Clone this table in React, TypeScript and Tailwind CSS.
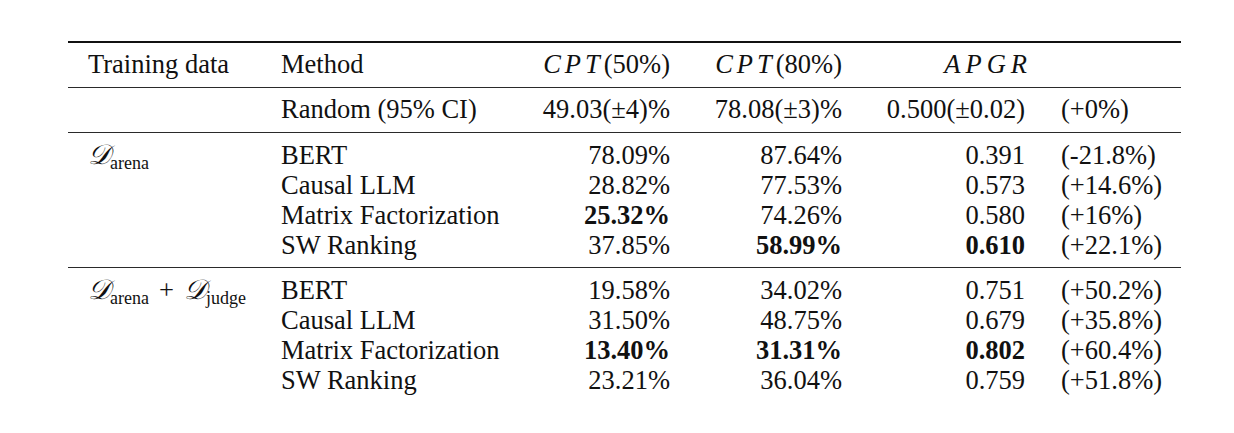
import React from 'react';

type Row = {
  method: string;
  cpt50: string;
  cpt80: string;
  apgr: string;
  gain: string;
  bold?: ('cpt50' | 'cpt80' | 'apgr')[];
};

const arenaRows: Row[] = [
  { method: 'BERT', cpt50: '78.09%', cpt80: '87.64%', apgr: '0.391', gain: '(-21.8%)' },
  { method: 'Causal LLM', cpt50: '28.82%', cpt80: '77.53%', apgr: '0.573', gain: '(+14.6%)' },
  { method: 'Matrix Factorization', cpt50: '25.32%', cpt80: '74.26%', apgr: '0.580', gain: '(+16%)', bold: ['cpt50'] },
  { method: 'SW Ranking', cpt50: '37.85%', cpt80: '58.99%', apgr: '0.610', gain: '(+22.1%)', bold: ['cpt80', 'apgr'] },
];

const judgeRows: Row[] = [
  { method: 'BERT', cpt50: '19.58%', cpt80: '34.02%', apgr: '0.751', gain: '(+50.2%)' },
  { method: 'Causal LLM', cpt50: '31.50%', cpt80: '48.75%', apgr: '0.679', gain: '(+35.8%)' },
  { method: 'Matrix Factorization', cpt50: '13.40%', cpt80: '31.31%', apgr: '0.802', gain: '(+60.4%)', bold: ['cpt50', 'cpt80', 'apgr'] },
  { method: 'SW Ranking', cpt50: '23.21%', cpt80: '36.04%', apgr: '0.759', gain: '(+51.8%)' },
];

const cols = 'grid grid-cols-[213px_259px_130px_172px_183px_1fr]';

function D({ sub }: { sub: string }) {
  return (
    <span className="whitespace-nowrap leading-none">
      <span className="italic text-[28px] leading-none">𝒟</span>
      <span className="text-[18px] leading-none relative top-[5px]">{sub}</span>
    </span>
  );
}

function Group({ label, rows, last }: { label: React.ReactNode; rows: Row[]; last?: boolean }) {
  return (
    <div className={last ? 'pt-[7px]' : 'pt-[7px] pb-[7px] border-b border-[#2a2a2a]'}>
      {rows.map((r, i) => (
        <div key={r.method} className={`${cols} h-[30px] leading-[30px]`}>
          <div className="pl-5 whitespace-nowrap">{i === 0 ? label : null}</div>
          <div className="whitespace-nowrap">{r.method}</div>
          <div className={`text-right ${r.bold?.includes('cpt50') ? 'font-bold' : ''}`}>{r.cpt50}</div>
          <div className={`text-right ${r.bold?.includes('cpt80') ? 'font-bold' : ''}`}>{r.cpt80}</div>
          <div className={`text-right ${r.bold?.includes('apgr') ? 'font-bold' : ''}`}>{r.apgr}</div>
          <div className="pl-[36px]">{r.gain}</div>
        </div>
      ))}
    </div>
  );
}

export default function App() {
  return (
    <div className="w-[1234px] h-[433px] bg-white pt-[41px] pl-[68px] text-[26.5px] text-[#111] font-[family-name:'Liberation_Serif','Times_New_Roman',serif]">
      <div className="w-[1113px]">
        <div className="border-t-2 border-[#111]" />
        <div className={`${cols} h-[45px] items-center border-b border-[#2a2a2a]`}>
          <div className="pl-5">Training data</div>
          <div>Method</div>
          <div className="text-right whitespace-nowrap">
            <span className="italic tracking-[4px]">CPT</span>(50%)
          </div>
          <div className="text-right whitespace-nowrap">
            <span className="italic tracking-[4px]">CPT</span>(80%)
          </div>
          <div className="text-right italic tracking-[5px] mr-[-7px]">APGR</div>
          <div />
        </div>
        <div className={`${cols} h-[45px] items-center border-b border-[#2a2a2a]`}>
          <div />
          <div>Random (95% CI)</div>
          <div className="text-right whitespace-nowrap">49.03(±4)%</div>
          <div className="text-right whitespace-nowrap">78.08(±3)%</div>
          <div className="text-right whitespace-nowrap">0.500(±0.02)</div>
          <div className="pl-[36px]">(+0%)</div>
        </div>
        <Group label={<D sub="arena" />} rows={arenaRows} />
        <Group
          last
          label={
            <span>
              <D sub="arena" />
              <span className="mx-[10px]">+</span>
              <D sub="judge" />
            </span>
          }
          rows={judgeRows}
        />
      </div>
    </div>
  );
}
